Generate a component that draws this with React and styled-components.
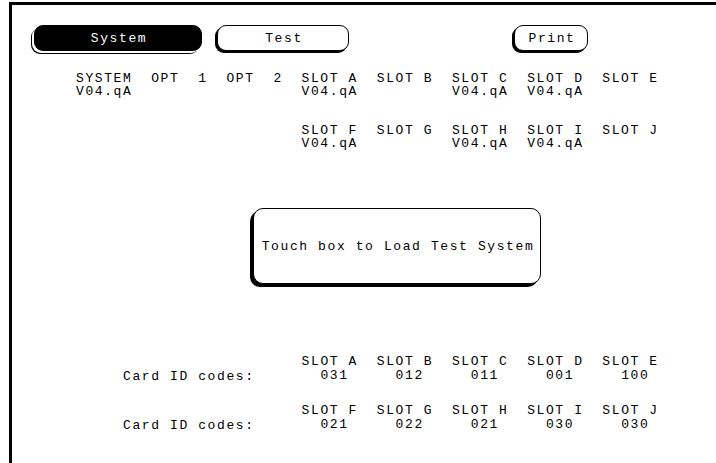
import React from 'react';
import styled, { createGlobalStyle } from 'styled-components';

// one character cell of the analyzer font
const CELL = 9.4;

const versions = [
  [
    { name: 'SYSTEM', ver: 'V04.qA' },
    { name: 'OPT  1', ver: '' },
    { name: 'OPT  2', ver: '' },
    { name: 'SLOT A', ver: 'V04.qA' },
    { name: 'SLOT B', ver: '' },
    { name: 'SLOT C', ver: 'V04.qA' },
    { name: 'SLOT D', ver: 'V04.qA' },
    { name: 'SLOT E', ver: '' },
  ],
  [
    { name: 'SLOT F', ver: 'V04.qA' },
    { name: 'SLOT G', ver: '' },
    { name: 'SLOT H', ver: 'V04.qA' },
    { name: 'SLOT I', ver: 'V04.qA' },
    { name: 'SLOT J', ver: '' },
  ],
];

const cardIds = [
  [
    ['SLOT A', '031'],
    ['SLOT B', '012'],
    ['SLOT C', '011'],
    ['SLOT D', '001'],
    ['SLOT E', '100'],
  ],
  [
    ['SLOT F', '021'],
    ['SLOT G', '022'],
    ['SLOT H', '021'],
    ['SLOT I', '030'],
    ['SLOT J', '030'],
  ],
];

const App = () => {
  return (
    <>
      <GlobalStyle />
      <Screen>
        <Toolbar>
          <Key $active $width={168}>System</Key>
          <Key $width={132}>Test</Key>
          <Key $width={74} $push>Print</Key>
        </Toolbar>

        <VersionGrid>
          {versions[0].map((v) => (
            <Field key={v.name}>
              <Line>{v.name}</Line>
              <Line>{v.ver}</Line>
            </Field>
          ))}
          {versions[1].map((v, i) => (
            <Field key={v.name} $col={i === 0 ? 4 : undefined}>
              <Line>{v.name}</Line>
              <Line>{v.ver}</Line>
            </Field>
          ))}
        </VersionGrid>

        <TouchBox>Touch box to Load Test System</TouchBox>

        <CardGrid>
          {cardIds.map((row, r) => (
            <React.Fragment key={r}>
              <CardLabel>Card ID codes:</CardLabel>
              {row.map(([slot, code]) => (
                <Field key={slot}>
                  <Line>{slot}</Line>
                  <Line $indent>{code}</Line>
                </Field>
              ))}
            </React.Fragment>
          ))}
        </CardGrid>
      </Screen>
    </>
  );
};

export default App;

const GlobalStyle = createGlobalStyle`
  html, body {
    margin: 0;
    background: #fff;
  }

  body {
    font-family: "Liberation Mono", "DejaVu Sans Mono", monospace;
    font-size: 13px;
    letter-spacing: 1.6px;
    color: #000;
  }
`;

const Screen = styled.div`
  height: 461px;
  margin: 2px 0 0 9px;
  border-top: 3px solid #000;
  border-left: 3px solid #000;
  box-sizing: border-box;
  display: flex;
  flex-direction: column;
  overflow: hidden;
`;

const Toolbar = styled.div`
  display: flex;
  align-items: center;
  gap: 15px;
  padding: 20px 0 0 22px;
`;

const Key = styled.button`
  width: ${(p) => p.$width}px;
  height: 26px;
  margin-left: ${(p) => (p.$push ? '150px' : '0')};
  padding: 0 0 0 2px;
  font: inherit;
  letter-spacing: inherit;
  border: 1px solid #000;
  border-radius: 9px;
  background: ${(p) => (p.$active ? '#000' : '#fff')};
  color: ${(p) => (p.$active ? '#fff' : '#000')};
  box-shadow: ${(p) =>
    p.$active ? '-2px 2px 0 0 #fff, -3px 3px 0 0 #000' : '-2px 2px 0 0 #000'};
  cursor: pointer;
`;

const VersionGrid = styled.div`
  display: grid;
  grid-template-columns: repeat(8, ${CELL * 8}px);
  row-gap: 26px;
  margin: 21px 0 0 64px;
`;

const Field = styled.div`
  display: flex;
  flex-direction: column;
  grid-column: ${(p) => (p.$col ? `${p.$col} / span 1` : 'auto')};
`;

const Line = styled.span`
  height: 13px;
  line-height: 13px;
  white-space: pre;
  padding-left: ${(p) => (p.$indent ? `${CELL * 2}px` : '0')};
`;

const TouchBox = styled.button`
  width: 288px;
  height: 76px;
  margin: 58px 0 0 241px;
  padding: 0 0 0 2px;
  font: inherit;
  letter-spacing: inherit;
  color: #000;
  background: #fff;
  border: 1px solid #000;
  border-radius: 10px;
  box-shadow: -3px 3px 0 0 #000;
  display: flex;
  align-items: center;
  justify-content: center;
  cursor: pointer;
`;

const CardGrid = styled.div`
  display: grid;
  grid-template-columns: ${CELL * 19}px repeat(5, ${CELL * 8}px);
  row-gap: 21px;
  margin: 71px 0 0 111px;

  ${Line} {
    height: 14px;
    line-height: 14px;
  }
`;

const CardLabel = styled.div`
  align-self: end;
  height: 13px;
  line-height: 13px;
`;
